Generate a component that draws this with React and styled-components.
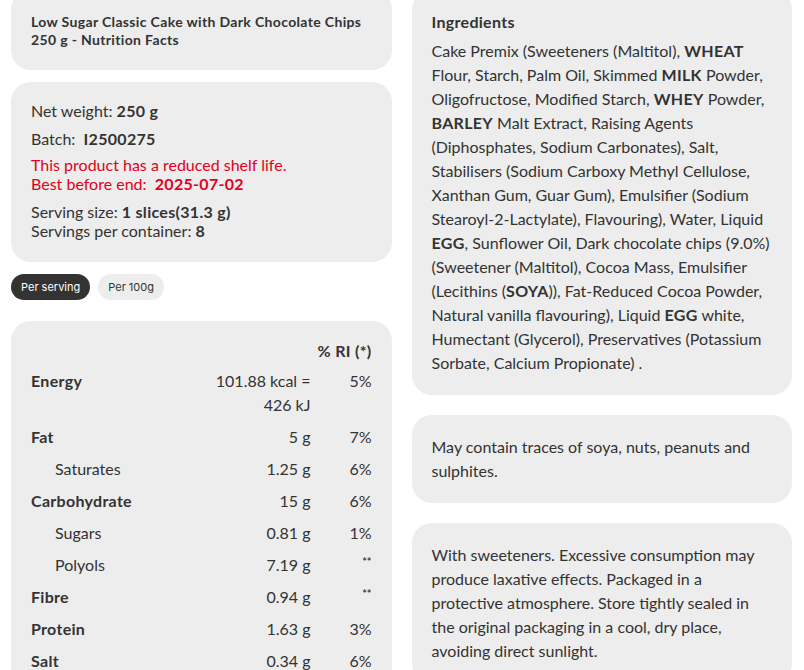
import React from "react";
import styled, { createGlobalStyle, css } from "styled-components";

const GlobalStyle = createGlobalStyle`
  html, body {
    margin: 0;
    padding: 0;
    background: #fff;
    overflow: hidden;
  }
  body {
    font-family: "Lato", "Liberation Sans", sans-serif;
    color: #333;
    -webkit-font-smoothing: antialiased;
  }
  b {
    font-weight: 700;
    letter-spacing: 0.3px;
  }
`;

const Page = styled.main`
  display: grid;
  grid-template-columns: 1fr 1fr;
  column-gap: 20px;
  align-items: start;
  padding: 0 12px 0 11px;
  margin-top: -10px;
`;

const Column = styled.section`
  display: flex;
  flex-direction: column;
  align-items: stretch;
`;

const Card = styled.div`
  background: #ededed;
  border-radius: 20px;
  padding: 20px;
  font-size: 16px;
  line-height: 24px;
  margin-top: ${({ $gap }) => $gap || 0}px;
`;

const TitleCard = styled(Card)`
  padding: 23px 20px 21px;
`;

const InfoCard = styled(Card)`
  padding: 19px 20px 22px;
`;

const Title = styled.h1`
  margin: 0;
  font-size: 14px;
  line-height: 18px;
  font-weight: 700;
  letter-spacing: 0.35px;
`;

const Info = styled.p`
  margin: 0 0 ${({ $mb }) => ($mb === undefined ? 9 : $mb)}px;
  line-height: 19px;
  ${({ $warn }) =>
    $warn &&
    css`
      color: #e2001a;
    `}
`;

const Pills = styled.div`
  display: flex;
  gap: 8px;
  margin-top: 12px;
`;

const Pill = styled.button`
  font-family: "Inter", "Liberation Sans", sans-serif;
  font-size: 11px;
  height: 26px;
  padding: 0 10px;
  border: none;
  border-radius: 13px;
  cursor: pointer;
  ${({ $active }) =>
    $active
      ? css`
          background: #333;
          color: #fff;
        `
      : css`
          background: #ededed;
          color: #333;
        `}
`;

const TableCard = styled(Card)`
  padding-top: 14px;
`;

const Table = styled.table`
  width: 100%;
  border-collapse: collapse;
  table-layout: fixed;
`;

const Th = styled.th`
  font-weight: 700;
  letter-spacing: 0.3px;
  text-align: right;
  padding: 4px 0 2px;
`;

const Label = styled.td`
  padding: 4px 0 4px ${({ $sub }) => ($sub ? 24 : 0)}px;
  font-weight: ${({ $sub }) => ($sub ? 400 : 700)};
  letter-spacing: ${({ $sub }) => ($sub ? 0 : 0.3)}px;
  vertical-align: top;
`;

const Value = styled.td`
  text-align: right;
  padding: 4px 0;
  vertical-align: top;
`;

const Stars = styled.span`
  font-size: 11px;
  font-weight: 700;
  vertical-align: top;
  line-height: 18px;
  color: #444;
`;

const Heading = styled.h2`
  margin: 0 0 5px;
  font-size: 16px;
  line-height: 24px;
  font-weight: 700;
  letter-spacing: 0.3px;
`;

const Text = styled.p`
  margin: 0;
`;

const nutrients = [
  { name: "Energy", value: "101.88 kcal = 426 kJ", ri: "5%" },
  { name: "Fat", value: "5 g", ri: "7%" },
  { name: "Saturates", value: "1.25 g", ri: "6%", sub: true },
  { name: "Carbohydrate", value: "15 g", ri: "6%" },
  { name: "Sugars", value: "0.81 g", ri: "1%", sub: true },
  { name: "Polyols", value: "7.19 g", ri: "**", sub: true },
  { name: "Fibre", value: "0.94 g", ri: "**" },
  { name: "Protein", value: "1.63 g", ri: "3%" },
  { name: "Salt", value: "0.34 g", ri: "6%" }
];

function NutritionTable() {
  return (
    <Table>
      <colgroup>
        <col />
        <col style={{ width: 96 }} />
        <col style={{ width: 61 }} />
      </colgroup>
      <thead>
        <tr>
          <th />
          <th />
          <Th>% RI (*)</Th>
        </tr>
      </thead>
      <tbody>
        {nutrients.map((n) => (
          <tr key={n.name}>
            <Label $sub={n.sub}>{n.name}</Label>
            <Value>{n.value}</Value>
            <Value>{n.ri === "**" ? <Stars>**</Stars> : n.ri}</Value>
          </tr>
        ))}
      </tbody>
    </Table>
  );
}

export default function App() {
  return (
    <>
      <GlobalStyle />
      <Page>
        <Column>
          <TitleCard>
            <Title>
              Low Sugar Classic Cake with Dark Chocolate Chips
              <br />
              250 g - Nutrition Facts
            </Title>
          </TitleCard>

          <InfoCard $gap={12}>
            <Info>
              Net weight: <b>250 g</b>
            </Info>
            <Info $mb={7}>
              Batch:&nbsp; <b>I2500275</b>
            </Info>
            <Info $warn $mb={9}>
              This product has a reduced shelf life.
              <br />
              Best before end:&nbsp; <b>2025-07-02</b>
            </Info>
            <Info $mb={0}>
              Serving size: <b>1 slices(31.3 g)</b>
              <br />
              Servings per container: <b>8</b>
            </Info>
          </InfoCard>

          <Pills>
            <Pill $active>Per serving</Pill>
            <Pill>Per 100g</Pill>
          </Pills>

          <TableCard $gap={21}>
            <NutritionTable />
          </TableCard>
        </Column>

        <Column>
          <Card>
            <Heading>Ingredients</Heading>
            <Text>
              Cake Premix (Sweeteners (Maltitol), <b>WHEAT</b> Flour, Starch, Palm Oil,
              Skimmed <b>MILK</b> Powder, Oligofructose, Modified Starch, <b>WHEY</b>{" "}
              Powder, <b>BARLEY</b> Malt Extract, Raising Agents (Diphosphates, Sodium
              Carbonates), Salt, Stabilisers (Sodium Carboxy Methyl Cellulose, Xanthan
              Gum, Guar Gum), Emulsifier (Sodium Stearoyl-2-Lactylate), Flavouring),
              Water, Liquid <b>EGG</b>, Sunflower Oil, Dark chocolate chips (9.0%)
              (Sweetener (Maltitol), Cocoa Mass, Emulsifier (Lecithins (<b>SOYA</b>)),
              Fat-Reduced Cocoa Powder, Natural vanilla flavouring), Liquid <b>EGG</b>{" "}
              white, Humectant (Glycerol), Preservatives (Potassium Sorbate, Calcium
              Propionate) .
            </Text>
          </Card>

          <Card $gap={20}>
            <Text>May contain traces of soya, nuts, peanuts and sulphites.</Text>
          </Card>

          <Card $gap={20}>
            <Text>
              With sweeteners. Excessive consumption may produce laxative effects.
              Packaged in a protective atmosphere. Store tightly sealed in the original
              packaging in a cool, dry place, avoiding direct sunlight.
            </Text>
          </Card>
        </Column>
      </Page>
    </>
  );
}
